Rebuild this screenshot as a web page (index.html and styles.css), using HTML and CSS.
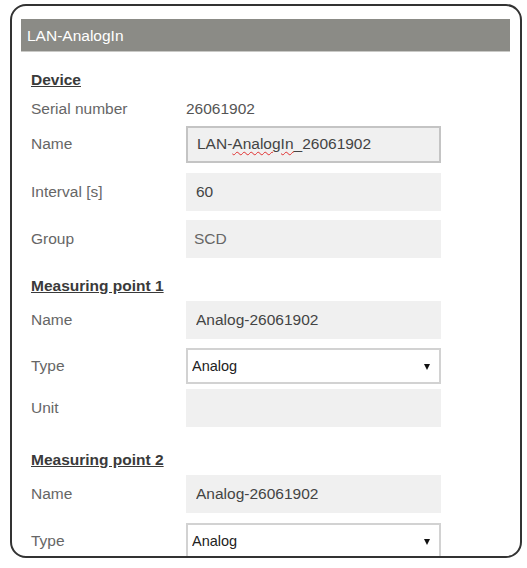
FILE: index.html
```html
<!DOCTYPE html>
<html lang="en">
<head>
    <meta charset="UTF-8">
    <meta name="viewport" content="width=device-width, initial-scale=1.0">
    <title>LAN-AnalogIn</title>
    <link rel="stylesheet" href="styles.css">
</head>
<body>
    <div class="frame">
        <div class="panel-title">LAN-AnalogIn</div>
        <div class="panel-body">
            <h4 class="section-title">Device</h4>
            <div class="field field-text">
                <span class="label">Serial number</span>
                <span class="value">26061902</span>
            </div>
            <div class="field">
                <label class="label" for="dev-name">Name</label>
                <div class="box box-edit" id="dev-name">LAN-<span class="typo">AnalogIn</span>_26061902</div>
            </div>
            <div class="field field-wide">
                <label class="label" for="dev-interval">Interval [s]</label>
                <input class="box" id="dev-interval" type="text" value="60" readonly>
            </div>
            <div class="field">
                <label class="label" for="dev-group">Group</label>
                <input class="box box-muted" id="dev-group" type="text" value="SCD" readonly>
            </div>

            <h4 class="section-title">Measuring point 1</h4>
            <div class="field">
                <label class="label" for="mp1-name">Name</label>
                <input class="box" id="mp1-name" type="text" value="Analog-26061902" readonly>
            </div>
            <div class="field field-select">
                <label class="label" for="mp1-type">Type</label>
                <span class="select-wrap">
                    <select id="mp1-type">
                        <option>Analog</option>
                    </select>
                </span>
            </div>
            <div class="field">
                <label class="label" for="mp1-unit">Unit</label>
                <input class="box" id="mp1-unit" type="text" value="" readonly>
            </div>

            <h4 class="section-title section-gap">Measuring point 2</h4>
            <div class="field">
                <label class="label" for="mp2-name">Name</label>
                <input class="box" id="mp2-name" type="text" value="Analog-26061902" readonly>
            </div>
            <div class="field field-select field-wide">
                <label class="label" for="mp2-type">Type</label>
                <span class="select-wrap">
                    <select id="mp2-type">
                        <option>Analog</option>
                    </select>
                </span>
            </div>
        </div>
    </div>
</body>
</html>
```

FILE: styles.css
```css
body, html {
    margin: 0;
    background: #fff;
    font-family: "Liberation Sans", Arial, sans-serif;
}
.frame {
    box-sizing: border-box;
    width: 512px;
    height: 554px;
    margin: 4px 0 0 10px;
    padding: 13px 10px 0 9px;
    border: 2px solid #333;
    border-radius: 16px;
    overflow: hidden;
}
.panel-title {
    height: 33px;
    line-height: 33px;
    padding-left: 6px;
    background-color: #8b8b86;
    border-bottom: 1px solid #c9c9c6;
    box-sizing: border-box;
    color: #fff;
    font-size: 15.5px;
}
.panel-body {
    padding-left: 10px;
}
.section-title {
    margin: 18px 0 0;
    line-height: 20px;
    font-size: 15.5px;
    font-weight: bold;
    color: #3a3a3a;
    text-decoration: underline;
}
.section-gap {
    margin-top: 23px;
}
.field {
    display: flex;
    align-items: center;
    height: 38px;
    margin-top: 9px;
}
.field-wide {
    margin-top: 10px;
}
.section-title + .field {
    margin-top: 5px;
}
.section-title + .field-text {
    height: 20px;
    margin-top: 9px;
}
.field-text + .field {
    margin-top: 6px;
}
.field-select {
    height: 36px;
}
.field-select + .field {
    margin-top: 5px;
}
.label {
    width: 155px;
    flex: none;
    font-size: 15.5px;
    color: #666;
}
.value {
    font-size: 15.5px;
    color: #555;
}
.box {
    box-sizing: border-box;
    width: 255px;
    height: 38px;
    padding: 0 10px;
    border: none;
    background-color: #f0f0f0;
    font-family: inherit;
    font-size: 15.5px;
    color: #444;
    outline: none;
}
.box-muted {
    padding-left: 8px;
    color: #666;
}
.box-edit {
    display: flex;
    align-items: center;
    padding-left: 9px;
    border: 2px solid #c4c4c4;
    height: 37px;
}
.typo {
    text-decoration: underline wavy #e03030;
    text-decoration-thickness: 1px;
    text-underline-offset: 2px;
}
.select-wrap {
    position: relative;
    display: block;
    width: 255px;
    height: 36px;
}
.select-wrap select {
    box-sizing: border-box;
    width: 100%;
    height: 100%;
    padding: 0 4px;
    border: 2px solid #d2d2d2;
    border-radius: 0;
    background: #fff;
    appearance: none;
    -webkit-appearance: none;
    font-family: inherit;
    font-size: 14.5px;
    color: #222;
}
.select-wrap::after {
    content: "";
    position: absolute;
    right: 11px;
    top: 16px;
    border-left: 3.5px solid transparent;
    border-right: 3.5px solid transparent;
    border-top: 6px solid #111;
    pointer-events: none;
}
```
